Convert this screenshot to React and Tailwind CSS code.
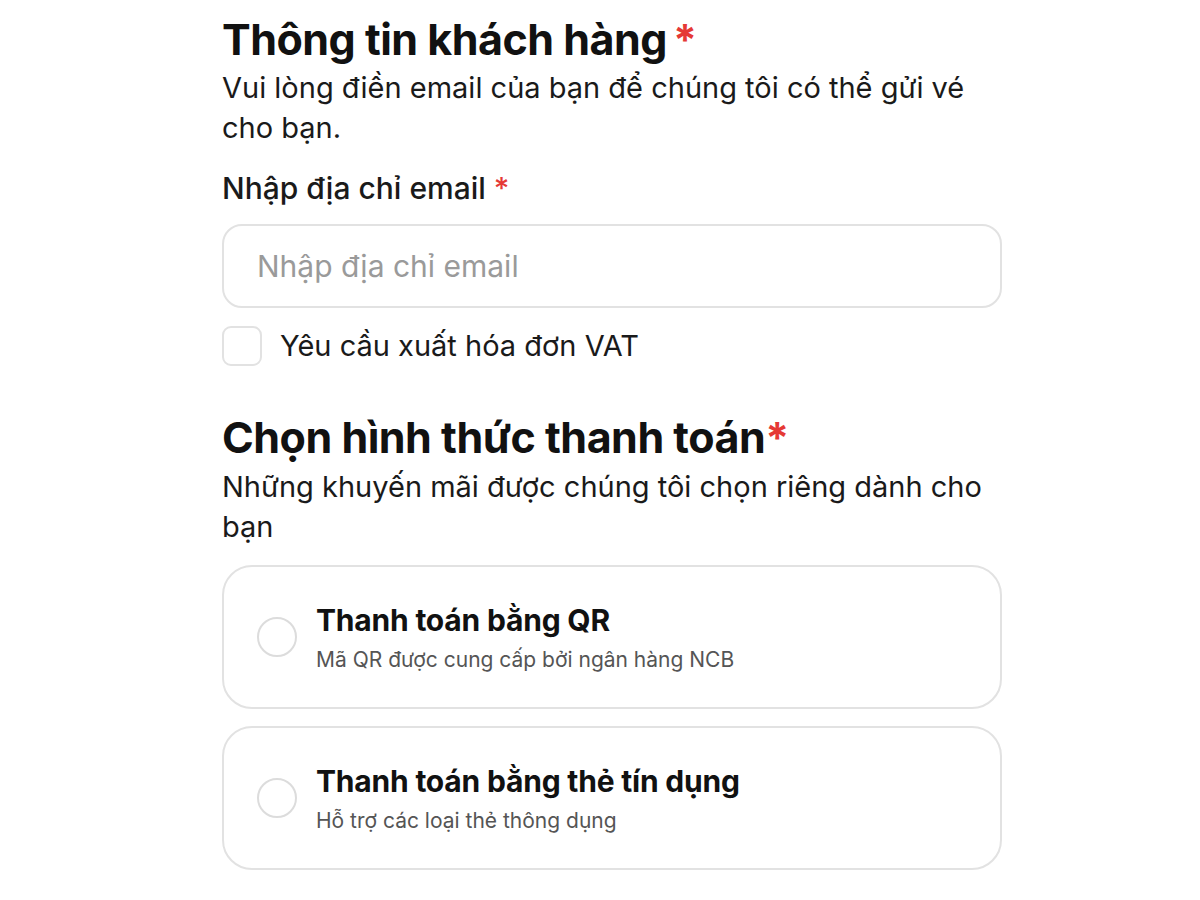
import React, { useState } from 'react';

const font = { fontFamily: 'Inter, "Noto Sans", sans-serif' };

const PaymentOption = ({ title, desc, selected, onSelect }) => (
    <button
        onClick={onSelect}
        className="w-full h-[144px] flex items-center gap-[19px] pl-[33px] pr-6 rounded-[30px] border-2 border-[#e2e2e2] bg-white text-left"
    >
        <span className={`w-[40px] h-[40px] shrink-0 rounded-full border-2 ${selected ? 'border-[#e53935]' : 'border-[#dcdcdc]'}`} />
        <span className="flex flex-col">
            <span className="text-[30px] leading-[38px] font-bold text-[#111] tracking-[-0.2px]">{title}</span>
            <span className="mt-[8px] text-[21px] leading-[26px] text-[#555]">{desc}</span>
        </span>
    </button>
);

export default function App() {
    const [method, setMethod] = useState(null);
    const [vat, setVat] = useState(false);

    return (
        <div className="min-h-[900px] bg-white" style={font}>
            <div className="w-[780px] ml-[222px] pt-[12px]">
                <h1 className="text-[43px] leading-[54px] font-bold text-[#111] tracking-[-0.5px]">
                    Thông tin khách hàng<span className="text-[#e53935] ml-[6px]">*</span>
                </h1>
                <p className="text-[29px] leading-[40px] text-[#1a1a1a] mt-[2px] pr-[20px]">
                    Vui lòng điền email của bạn để chúng tôi có thể gửi vé cho bạn.
                </p>
                <label className="block mt-[20px] text-[30px] leading-[40px] font-medium text-[#1a1a1a]">
                    Nhập địa chỉ email <span className="text-[#e53935]">*</span>
                </label>
                <input
                    type="email"
                    placeholder="Nhập địa chỉ email"
                    className="block mt-[16px] w-full h-[84px] rounded-[20px] border-2 border-[#e2e2e2] px-[33px] text-[30px] text-[#111] placeholder:text-[#9a9a9a] outline-none"
                />
                <div className="mt-[18px] flex items-center gap-[18px]">
                    <button
                        onClick={() => setVat(!vat)}
                        className={`w-[40px] h-[40px] rounded-[9px] border-2 ${vat ? 'border-[#e53935] bg-[#e53935]' : 'border-[#e2e2e2]'}`}
                    />
                    <span className="text-[29px] leading-[40px] text-[#1a1a1a]">Yêu cầu xuất hóa đơn VAT</span>
                </div>

                <h2 className="mt-[44px] text-[43px] leading-[54px] font-bold text-[#111] tracking-[-0.5px]">
                    Chọn hình thức thanh toán<span className="text-[#e53935]">*</span>
                </h2>
                <p className="text-[29px] leading-[40px] text-[#1a1a1a] mt-[3px] pr-[20px]">
                    Những khuyến mãi được chúng tôi chọn riêng dành cho bạn
                </p>
                <div className="mt-[18px] flex flex-col gap-[17px]">
                    <PaymentOption
                        title="Thanh toán bằng QR"
                        desc="Mã QR được cung cấp bởi ngân hàng NCB"
                        selected={method === 'qr'}
                        onSelect={() => setMethod('qr')}
                    />
                    <PaymentOption
                        title="Thanh toán bằng thẻ tín dụng"
                        desc="Hỗ trợ các loại thẻ thông dụng"
                        selected={method === 'card'}
                        onSelect={() => setMethod('card')}
                    />
                </div>
            </div>
        </div>
    );
}
